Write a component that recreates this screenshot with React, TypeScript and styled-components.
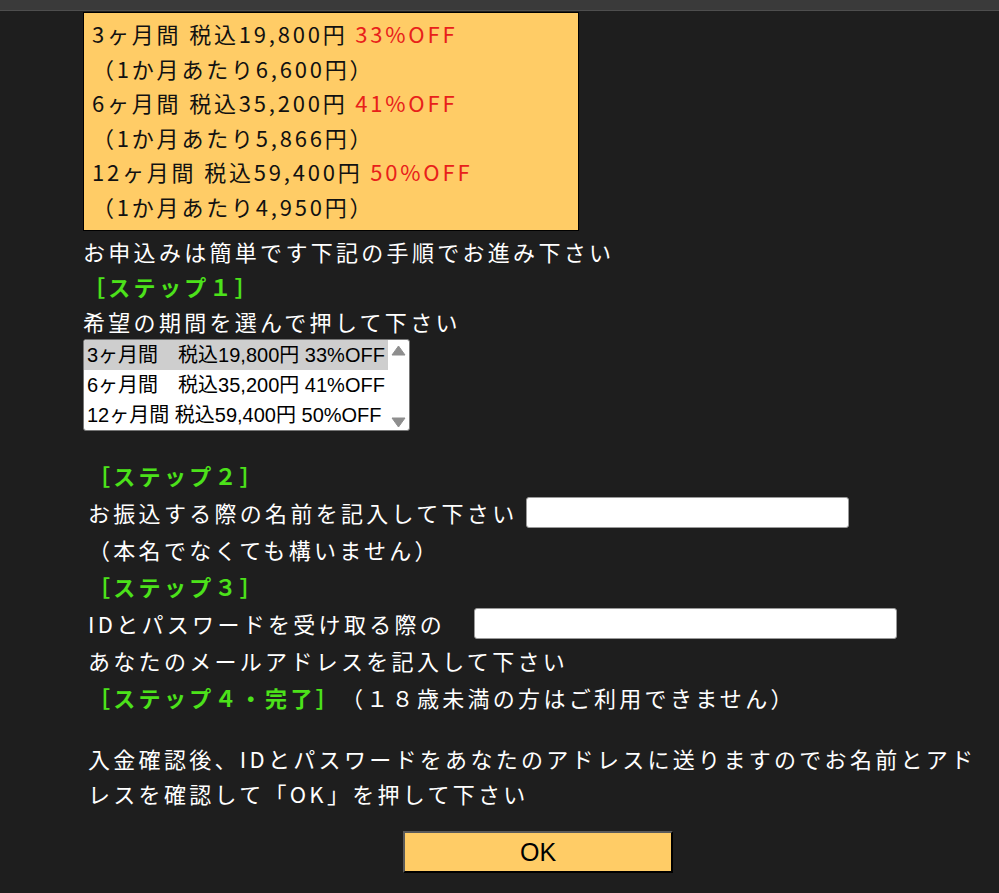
import React from "react"
import styled, { createGlobalStyle } from "styled-components"

const GlobalStyle = createGlobalStyle`
  html, body {
    margin : 0;
    padding : 0;
    background : #1e1e1e;
  }
  body {
    font-family : "Noto Sans CJK JP", "Noto Sans", sans-serif;
    color : #ffffff;
  }
`

const TopBar = styled.div`
  height : 10px;
  background : #3a3a3a;
  border-bottom : 1px solid #4e4e4e;
`

const Page = styled.div`
  width : 905px;
  padding-left : 83px;
  box-sizing : content-box;
`

const PriceBox = styled.div`
  width : 496px;
  box-sizing : border-box;
  margin-top : 1px;
  padding : 3px 8px 7px;
  background : #ffcc66;
  border : 1px solid #000;
  color : #111;
  font-size : 22px;
  line-height : 34.5px;
  letter-spacing : 2.8px;
`

const PriceLine = styled.div`
  white-space : nowrap;
`

const Off = styled.span`
  color : #e8201a;
`

type LineProps = {
    $top? : number
}

const Line = styled.div<LineProps>`
  font-size : 22px;
  line-height : 35px;
  letter-spacing : 3.3px;
  margin-top : ${(props) => props.$top ?? 0}px;
  white-space : nowrap;
`

const Step = styled.span`
  color : #4ce21a;
  font-weight : 700;
`

const ListBox = styled.div`
  width : 327px;
  height : 92px;
  box-sizing : border-box;
  display : flex;
  background : #fff;
  border : 1px solid #767676;
  border-radius : 3px;
  overflow : hidden;
`

const Options = styled.div`
  flex : 1;
  display : flex;
  flex-direction : column;
`

type OptionProps = {
    $selected : boolean
}

const Option = styled.div<OptionProps>`
  height : 30px;
  line-height : 30px;
  padding-left : 3px;
  font-family : "Liberation Sans", "Noto Sans CJK JP", sans-serif;
  font-size : 20px;
  color : #000;
  white-space : nowrap;
  background : ${(props) => props.$selected ? "#cecece" : "transparent"};
`

const ScrollTrack = styled.div`
  width : 21px;
  display : flex;
  flex-direction : column;
  justify-content : space-between;
  align-items : center;
  padding : 5px 0 2px;
`

const Lower = styled.div`
  padding-left : 5px;
  margin-top : 26px;
`

const Row = styled.div`
  font-size : 22px;
  line-height : 37px;
  letter-spacing : 3.3px;
  white-space : nowrap;
  display : flex;
  align-items : center;
`

type FieldProps = {
    $width : number
    $gap : number
}

const Field = styled.input<FieldProps>`
  width : ${(props) => props.$width}px;
  height : 31px;
  margin-left : ${(props) => props.$gap}px;
  box-sizing : border-box;
  border : 1px solid #999;
  border-radius : 3px;
  background : #fff;
  outline : none;
`

const Notice = styled.p`
  margin : 25px 0 0;
  font-size : 22px;
  line-height : 35px;
  letter-spacing : 3.3px;
`

const ButtonRow = styled.div`
  display : flex;
  justify-content : center;
  margin-top : 20px;
`

const OkButton = styled.button`
  width : 270px;
  height : 42px;
  background : #ffcc66;
  border : 2px solid;
  border-color : #5a5a5a #000 #000 #5a5a5a;
  font-family : "Liberation Sans", Arial, sans-serif;
  font-size : 25px;
  color : #000;
  cursor : pointer;
`

const Arrow = ({ up } : { up : boolean }) => (
    <svg width="15" height="11" viewBox="0 0 15 11">
        <polygon points={up ? "7.5,1 14,10 1,10" : "1,1 14,1 7.5,10"} fill="#8e8e8e" strokeLinejoin="round" stroke="#8e8e8e" strokeWidth="1"/>
    </svg>
)

const plans = [
    { label : "3ヶ月間 税込19,800円", off : "33%OFF", monthly : "（1か月あたり6,600円）", option : "3ヶ月間　税込19,800円 33%OFF" },
    { label : "6ヶ月間 税込35,200円", off : "41%OFF", monthly : "（1か月あたり5,866円）", option : "6ヶ月間　税込35,200円 41%OFF" },
    { label : "12ヶ月間 税込59,400円", off : "50%OFF", monthly : "（1か月あたり4,950円）", option : "12ヶ月間 税込59,400円 50%OFF" },
]

const App = () => {
    return (
        <>
            <GlobalStyle/>
            <TopBar/>
            <Page>
                <PriceBox>
                    {plans.map((p) => (
                        <React.Fragment key={p.label}>
                            <PriceLine>{p.label} <Off>{p.off}</Off></PriceLine>
                            <PriceLine>{p.monthly}</PriceLine>
                        </React.Fragment>
                    ))}
                </PriceBox>

                <Line $top={3}>お申込みは簡単です下記の手順でお進み下さい</Line>
                <Line><Step>［ステップ１］</Step></Line>
                <Line>希望の期間を選んで押して下さい</Line>

                <ListBox>
                    <Options>
                        {plans.map((p, i) => (
                            <Option key={p.option} $selected={i === 0}>{p.option}</Option>
                        ))}
                    </Options>
                    <ScrollTrack>
                        <Arrow up={true}/>
                        <Arrow up={false}/>
                    </ScrollTrack>
                </ListBox>

                <Lower>
                    <Row><Step>［ステップ２］</Step></Row>
                    <Row>
                        お振込する際の名前を記入して下さい
                        <Field type="text" $width={323} $gap={9}/>
                    </Row>
                    <Row>（本名でなくても構いません）</Row>
                    <Row><Step>［ステップ３］</Step></Row>
                    <Row>
                        IDとパスワードを受け取る際の
                        <Field type="text" $width={423} $gap={29}/>
                    </Row>
                    <Row>あなたのメールアドレスを記入して下さい</Row>
                    <Row><Step>［ステップ４・完了］</Step>（１８歳未満の方はご利用できません）</Row>

                    <Notice>
                        入金確認後、IDとパスワードをあなたのアドレスに送りますのでお名前とアドレスを確認して「OK」を押して下さい
                    </Notice>

                    <ButtonRow>
                        <OkButton>OK</OkButton>
                    </ButtonRow>
                </Lower>
            </Page>
        </>
    )
}

export default App
